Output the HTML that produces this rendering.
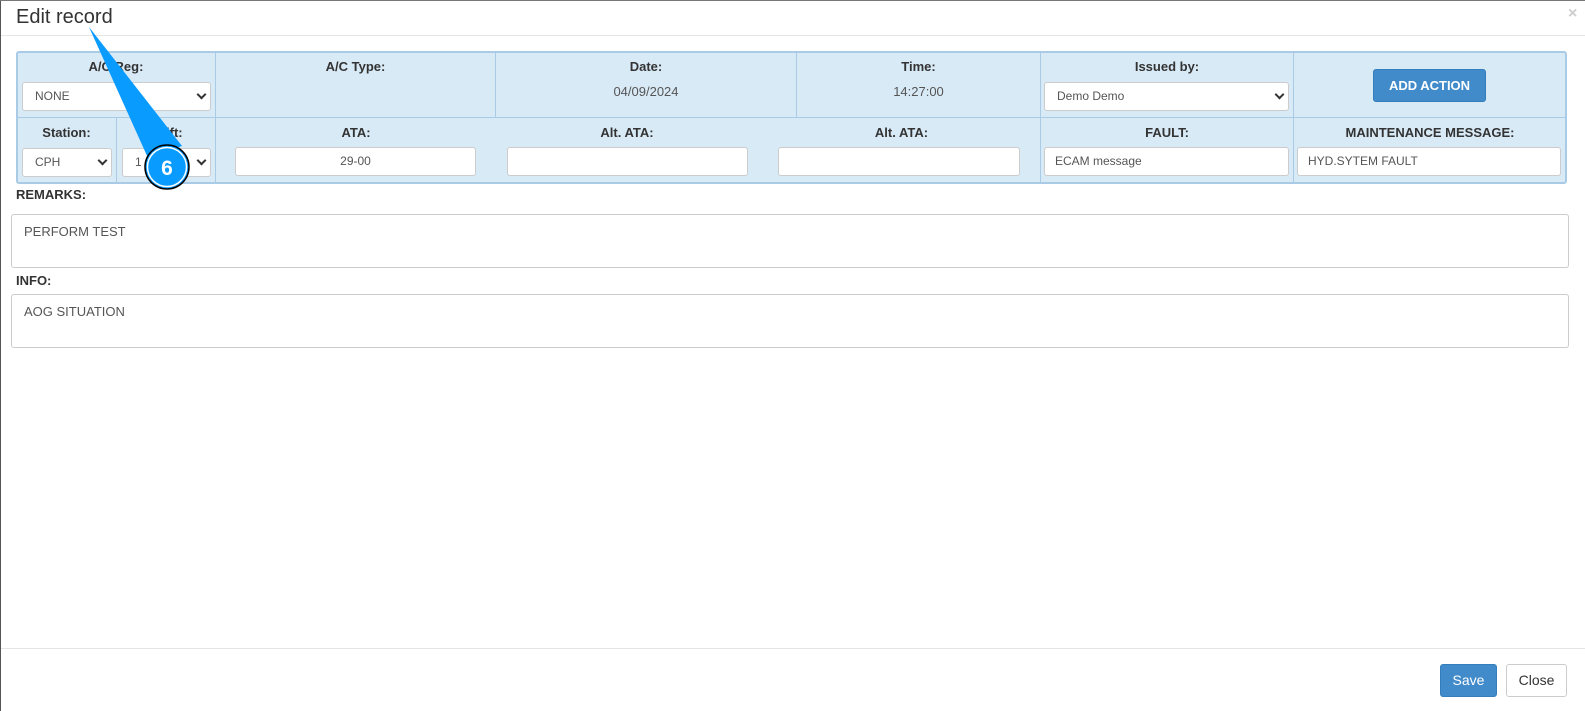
<!DOCTYPE html>
<html><head><style>
*{box-sizing:border-box}
body{margin:0;width:1585px;height:711px;position:relative;background:#fff;font-family:"Liberation Sans",Arial,sans-serif;color:#333;overflow:hidden}
.a{position:absolute}
.lbl{position:absolute;font-weight:bold;font-size:13px;text-align:center}
.inp{position:absolute;background:#fff;border:1px solid #ccc;border-radius:3px;font-size:12px;color:#555;height:29px;line-height:27px;padding-left:12px}
.sel::after{content:"";position:absolute;right:5px;top:8px;width:5px;height:5px;border-right:2px solid #333;border-bottom:2px solid #333;transform:rotate(45deg)}
.vl{position:absolute;width:1px;background:#a9cbe6}
</style></head><body>
<div class="a" style="left:0;top:0;width:1px;height:711px;background:#555"></div>
<div class="a" style="left:0;top:0;width:1585px;height:1px;background:#777"></div>
<div class="a" style="left:16px;top:6px;font-size:20px;color:#333">Edit record</div>
<div class="a" style="left:1568px;top:5px;font-size:16px;color:#ccc;font-weight:bold">×</div>
<div class="a" style="left:1px;top:35px;width:1584px;height:1px;background:#e5e5e5"></div>

<div class="a" style="left:16px;top:51px;width:1551px;height:133px;background:#d9eaf7;border:2px solid #a9cbe6;border-radius:3px"></div>
<div class="a" style="left:17px;top:117px;width:1549px;height:1px;background:#a9cbe6"></div>
<div class="vl" style="left:215px;top:52px;height:131px"></div>
<div class="vl" style="left:495px;top:52px;height:65px"></div>
<div class="vl" style="left:796px;top:52px;height:65px"></div>
<div class="vl" style="left:1040px;top:52px;height:131px"></div>
<div class="vl" style="left:1293px;top:52px;height:131px"></div>
<div class="vl" style="left:116px;top:117px;height:66px"></div>

<div class="lbl" style="left:17px;top:59px;width:198px">A/C Reg:</div>
<div class="inp sel" style="left:22px;top:82px;width:189px">NONE</div>
<div class="lbl" style="left:216px;top:59px;width:279px">A/C Type:</div>
<div class="lbl" style="left:496px;top:59px;width:300px">Date:</div>
<div class="a" style="left:496px;top:84px;width:300px;text-align:center;font-size:13px;color:#555">04/09/2024</div>
<div class="lbl" style="left:797px;top:59px;width:243px">Time:</div>
<div class="a" style="left:797px;top:84px;width:243px;text-align:center;font-size:13px;color:#555">14:27:00</div>
<div class="lbl" style="left:1041px;top:59px;width:252px">Issued by:</div>
<div class="inp sel" style="left:1044px;top:82px;width:245px">Demo Demo</div>
<div class="a" style="left:1373px;top:69px;width:113px;height:33px;background:#428bca;border:1px solid #357ebd;border-radius:3px;color:#fff;font-weight:bold;font-size:13px;text-align:center;line-height:31px">ADD ACTION</div>

<div class="lbl" style="left:17px;top:125px;width:99px">Station:</div>
<div class="inp sel" style="left:22px;top:148px;width:90px">CPH</div>
<div class="lbl" style="left:117px;top:125px;width:98px">Shift:</div>
<div class="inp sel" style="left:122px;top:148px;width:89px">1</div>
<div class="lbl" style="left:216px;top:125px;width:280px">ATA:</div>
<div class="inp" style="left:235px;top:147px;width:241px;text-align:center;padding:0">29-00</div>
<div class="lbl" style="left:491px;top:125px;width:272px">Alt. ATA:</div>
<div class="inp" style="left:507px;top:147px;width:241px"></div>
<div class="lbl" style="left:763px;top:125px;width:277px">Alt. ATA:</div>
<div class="inp" style="left:778px;top:147px;width:242px"></div>
<div class="lbl" style="left:1041px;top:125px;width:252px">FAULT:</div>
<div class="inp" style="left:1044px;top:147px;width:245px;padding-left:10px">ECAM message</div>
<div class="lbl" style="left:1294px;top:125px;width:272px">MAINTENANCE MESSAGE:</div>
<div class="inp" style="left:1297px;top:147px;width:264px;padding-left:10px">HYD.SYTEM FAULT</div>

<div class="lbl" style="left:16px;top:187px">REMARKS:</div>
<div class="inp" style="left:11px;top:214px;width:1558px;height:54px;line-height:normal;padding-top:9px;font-size:13px">PERFORM TEST</div>
<div class="lbl" style="left:16px;top:273px">INFO:</div>
<div class="inp" style="left:11px;top:294px;width:1558px;height:54px;line-height:normal;padding-top:9px;font-size:13px">AOG SITUATION</div>

<div class="a" style="left:1px;top:648px;width:1584px;height:1px;background:#e5e5e5"></div>
<div class="a" style="left:1440px;top:664px;width:57px;height:33px;background:#428bca;border:1px solid #357ebd;border-radius:3px;color:#fff;font-size:14px;text-align:center;line-height:31px">Save</div>
<div class="a" style="left:1506px;top:664px;width:61px;height:33px;background:#fff;border:1px solid #ccc;border-radius:3px;color:#333;font-size:14px;text-align:center;line-height:31px">Close</div>

<svg class="a" style="left:0;top:0" width="260" height="200">
<polygon points="89,27 182,146 148,158" fill="#0a9bff"/>
<circle cx="167" cy="167" r="22" fill="#0a9bff" stroke="#000" stroke-width="1.5"/>
<circle cx="167" cy="167" r="19.5" fill="none" stroke="#fff" stroke-width="1.5"/>
<text x="167" y="175" text-anchor="middle" font-family="Liberation Sans" font-weight="bold" font-size="21" fill="#fff">6</text>
</svg>
</body></html>
